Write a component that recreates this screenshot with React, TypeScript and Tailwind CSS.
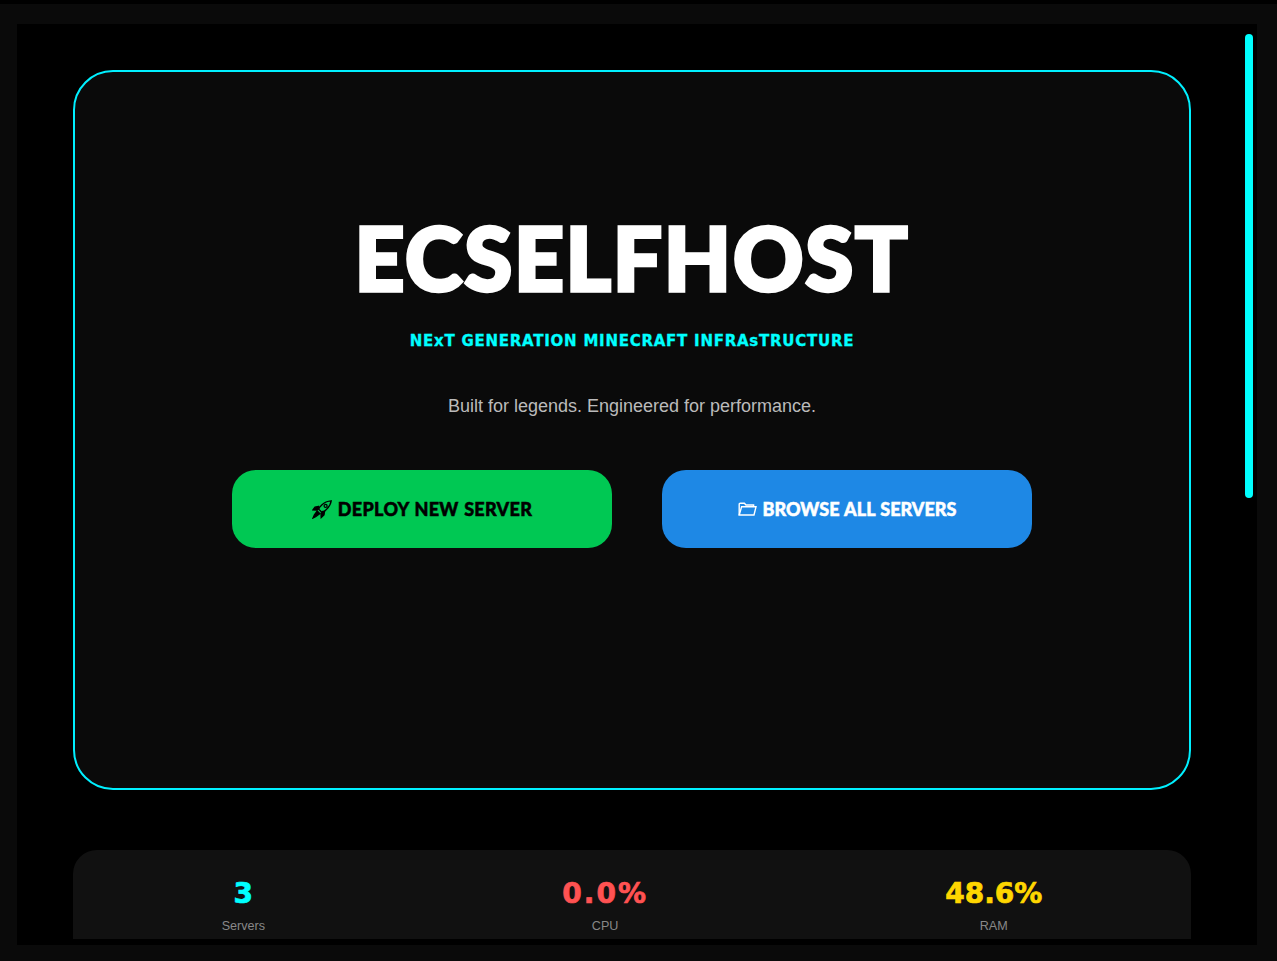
import React from 'react';

function RocketIcon() {
  return (
    <svg width="20" height="19" viewBox="0 0 20 19" fill="none" stroke="black" strokeWidth="1.3" className="shrink-0">
      <path d="M19.2 0.8C15.5 1 12.5 2.2 10 4.8L6.2 8.8L10.6 13L14.6 9.2C17.2 6.6 18.8 4.2 19.2 0.8Z" />
      <circle cx="13.6" cy="5.9" r="1.5" />
      <path d="M6.6 6.4L3 7.2L0.8 10L5 10.2L7 8.2Z" fill="black" />
      <path d="M12.6 11.2L12 15L9.2 17.6L9 13.2L10.8 11.4Z" fill="black" />
      <path d="M5.2 11L7.8 13.6L3.6 16.6L1 18L2.4 14.8Z" fill="black" />
    </svg>
  );
}

function FolderIcon() {
  return (
    <svg width="19" height="14" viewBox="0 0 19 14" fill="none" stroke="white" strokeWidth="1.4" className="shrink-0">
      <path d="M1.2 13V2.4C1.2 1.6 1.6 1.2 2.4 1.2H6.4L8 3H15.6V4.8" />
      <path d="M1.2 13L3.6 4.8H18L16 13H1.2Z" />
    </svg>
  );
}

function Stat({ value, label, color }: { value: string; label: string; color: string }) {
  return (
    <div className="flex flex-col items-center">
      <div className={`font-['DejaVu_Sans'] font-bold text-[28px] leading-[34px] [-webkit-text-stroke:0.7px_currentColor] ${color}`}>{value}</div>
      <div className="font-['Liberation_Sans'] text-[12.6px] leading-[16px] mt-[7px] text-[#888888]">{label}</div>
    </div>
  );
}

export default function App() {
  return (
    <div className="h-[961px] w-full overflow-hidden bg-[#0a0a0a]">
      <div className="h-[4px] bg-black" />
      <div className="mt-[20px] ml-[17px] mr-[20px] h-[921px] bg-black pb-[6px]">
        <div className="relative h-[915px] overflow-hidden pt-[46px] pl-[56px] pr-[66px]">
          {/* scrollbar */}
          <div className="absolute top-[10px] right-[4px] w-[8px] h-[464px] rounded-[4px] bg-[#00ffff]" />

          <section className="h-[720px] rounded-[40px] border-2 border-[#00f0ff] bg-[#0a0a0a] flex flex-col items-center pt-[142px]">
            <h1 className="font-['Lato'] font-black text-[87px] leading-[87px] tracking-[1.8px] text-white whitespace-nowrap [-webkit-text-stroke:3.5px_white]">
              ECSELFHOST
            </h1>
            <p className="mt-[31px] font-['DejaVu_Sans'] font-bold text-[15px] leading-[18px] tracking-[0.75px] text-[#00ffff] whitespace-nowrap [-webkit-text-stroke:0.3px_#00ffff]">
              NExT GENERATION MINECRAFT INFRAsTRUCTURE
            </p>
            <p className="mt-[46px] font-['Liberation_Sans'] text-[18px] leading-[20px] text-[#bbbbbb]">
              Built for legends. Engineered for performance.
            </p>
            <div className="mt-[54px] flex gap-[50px]">
              <button className="w-[380px] h-[78px] rounded-[24px] bg-[#00c853] flex items-center justify-center gap-[6px] font-['Lato'] font-black text-[18px] tracking-[0.3px] [word-spacing:1px] text-black [-webkit-text-stroke:0.5px_black]">
                <RocketIcon />
                DEPLOY NEW SERVER
              </button>
              <button className="w-[370px] h-[78px] rounded-[24px] bg-[#1e88e5] flex items-center justify-center gap-[6px] font-['Lato'] font-black text-[18px] [word-spacing:1px] text-white [-webkit-text-stroke:0.5px_white]">
                <FolderIcon />
                BROWSE ALL SERVERS
              </button>
            </div>
          </section>

          <section className="mt-[60px] h-[120px] rounded-[24px] bg-[#111111] flex justify-around pt-[27px]">
            <Stat value="3" label="Servers" color="text-[#00ffff]" />
            <Stat value="0.0%" label="CPU" color="text-[#ff5252] tracking-[2px]" />
            <Stat value="48.6%" label="RAM" color="text-[#ffd600]" />
          </section>
        </div>
      </div>
    </div>
  );
}
